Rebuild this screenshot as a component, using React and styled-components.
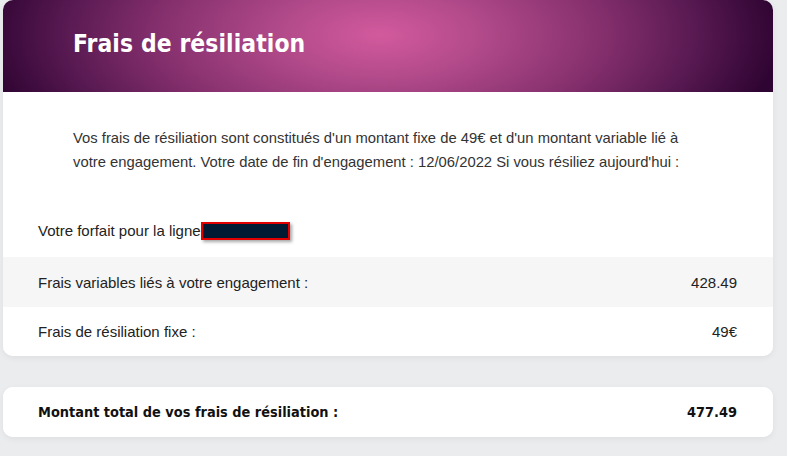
import React from 'react';
import styled, { createGlobalStyle } from 'styled-components';

const Global = createGlobalStyle`
  html, body {
    margin: 0;
    padding: 0;
    background: #ebecee;
  }
  body {
    font-family: 'Liberation Sans', Arial, sans-serif;
  }
`;

const Page = styled.div`
  padding: 0 14px 20px 3px;
  display: flex;
  flex-direction: column;
  gap: 31px;
`;

const Card = styled.div`
  background: #fff;
  border-radius: 10px;
  box-shadow: 0 2px 6px rgba(0, 0, 0, 0.06);
  overflow: hidden;
`;

const Header = styled.div`
  height: 92px;
  padding: 0 70px;
  display: flex;
  align-items: center;
  box-sizing: border-box;
  background: radial-gradient(
    ellipse 52% 190% at 49% 38%,
    #d25a9d 0%,
    #b24a8a 25%,
    #86306e 55%,
    #561850 80%,
    #2e0432 100%
  );
`;

const Title = styled.h1`
  margin: 0 0 6px;
  color: #fff;
  font-family: 'DejaVu Sans Condensed', 'Liberation Sans Narrow', sans-serif;
  font-weight: bold;
  font-size: 24.4px;
  letter-spacing: 0.1px;
`;

const Intro = styled.p`
  margin: 0;
  padding: 34px 70px 0;
  font-size: 14.8px;
  line-height: 24px;
  color: #333;
`;

const LineLabel = styled.div`
  padding: 47px 35px 17px;
  font-size: 15px;
  color: #222;
  display: flex;
  align-items: center;
`;

const Redacted = styled.span`
  display: inline-block;
  width: 85px;
  height: 14px;
  background: #001a33;
  border: 2px solid #e00000;
  box-shadow: 2px 2px 3px rgba(0, 0, 0, 0.35);
  margin-top: 1px;
`;

const Row = styled.div`
  height: ${p => (p.$last ? 49 : 50)}px;
  padding: 0 36px 0 35px;
  display: flex;
  align-items: center;
  justify-content: space-between;
  background: ${p => (p.$shaded ? '#f6f6f6' : '#fff')};
  font-size: 15px;
  color: #222;
`;

const TotalRow = styled(Row)`
  font-family: 'DejaVu Sans Condensed', 'Liberation Sans Narrow', sans-serif;
  font-weight: bold;
  font-size: 14.4px;
  color: #111;
`;

export default function App() {
  return (
    <>
      <Global />
      <Page>
        <Card>
          <Header>
            <Title>Frais de résiliation</Title>
          </Header>
          <Intro>
            Vos frais de résiliation sont constitués d'un montant fixe de 49€ et d'un montant variable lié à
            votre engagement. Votre date de fin d'engagement : 12/06/2022 Si vous résiliez aujourd'hui :
          </Intro>
          <LineLabel>
            Votre forfait pour la ligne<Redacted />
          </LineLabel>
          <Row $shaded>
            <span>Frais variables liés à votre engagement :</span>
            <span>428.49</span>
          </Row>
          <Row $last>
            <span>Frais de résiliation fixe :</span>
            <span>49€</span>
          </Row>
        </Card>
        <Card>
          <TotalRow>
            <span>Montant total de vos frais de résiliation :</span>
            <span>477.49</span>
          </TotalRow>
        </Card>
      </Page>
    </>
  );
}
